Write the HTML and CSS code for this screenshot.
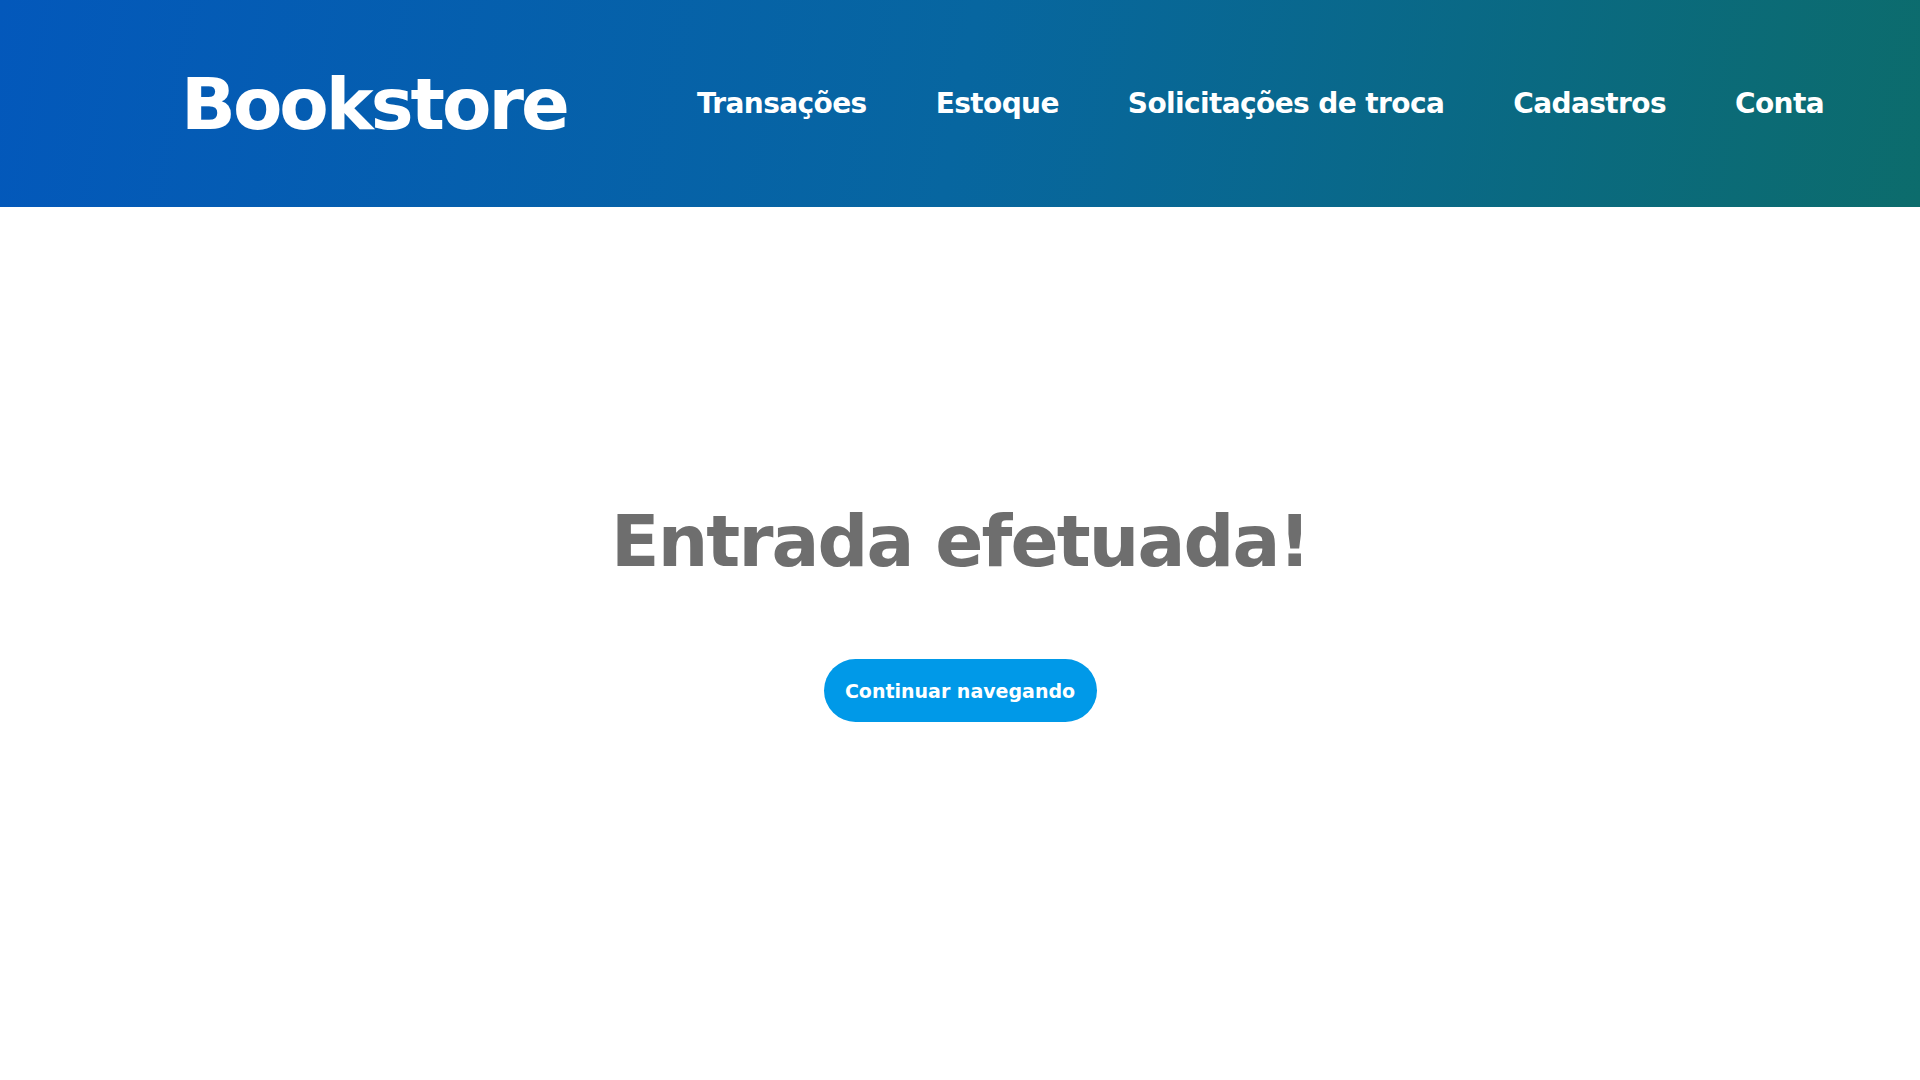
FILE: index.html
```html
<!DOCTYPE html>
<html lang="pt-BR">
<head>
<meta charset="utf-8">
<title>Bookstore</title>
<link rel="stylesheet" href="styles.css">
</head>
<body>
<header class="topbar">
  <a class="logo" href="#">Bookstore</a>
  <nav class="nav">
    <a href="#">Transações</a>
    <a href="#">Estoque</a>
    <a href="#">Solicitações de troca</a>
    <a href="#">Cadastros</a>
    <a href="#">Conta</a>
  </nav>
</header>
<main class="content">
  <h1 class="title">Entrada efetuada!</h1>
  <a class="btn" href="#">Continuar navegando</a>
</main>
</body>
</html>
```
FILE: styles.css
```css
* { box-sizing: border-box; }
html, body { margin: 0; padding: 0; }
body {
  font-family: "DejaVu Sans", "Open Sans", sans-serif;
  background: #ffffff;
  height: 1080px;
  overflow: hidden;
}
a { text-decoration: none; color: inherit; }
.topbar {
  height: 207px;
  display: flex;
  align-items: center;
  justify-content: space-between;
  padding: 0 96px 0 181px;
  background: linear-gradient(100deg, #0358bb 0%, #0766a0 50%, #0c6c6c 100%);
  color: #ffffff;
}
.logo {
  font-size: 72px;
  font-weight: 700;
  letter-spacing: -3px;
  line-height: 1;
}
.nav {
  display: flex;
  gap: 69px;
}
.nav a {
  font-size: 28px;
  font-weight: 700;
  letter-spacing: -0.6px;
}
.content {
  display: flex;
  flex-direction: column;
  align-items: center;
  padding-top: 299px;
}
.title {
  margin: 0;
  font-size: 71px;
  font-weight: 700;
  color: #6e6e6e;
  letter-spacing: -1.9px;
  line-height: 1;
}
.btn {
  margin-top: 82px;
  width: 273px;
  height: 63px;
  border-radius: 32px;
  background: #0099e8;
  color: #ffffff;
  font-size: 19px;
  font-weight: 700;
  display: flex;
  align-items: center;
  justify-content: center;
}
```
